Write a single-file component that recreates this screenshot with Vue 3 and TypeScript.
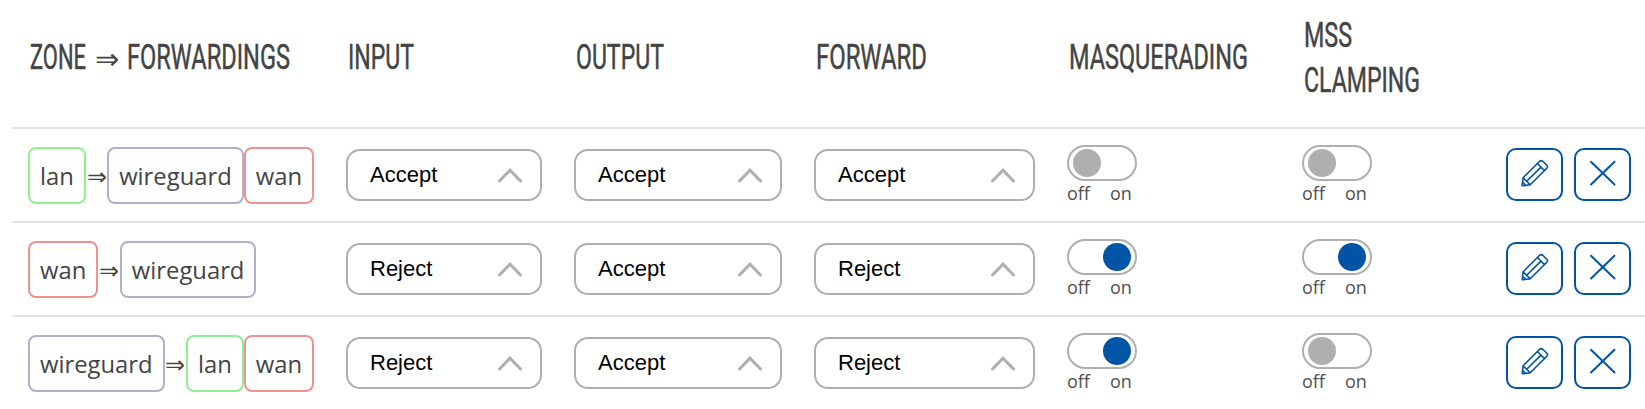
<script setup lang="ts">
interface Word {
  text: string
  width: number
  arrow?: boolean
}

type Zone = 'lan' | 'wan' | 'wireguard'

interface Rule {
  zone: Zone
  forwardings: Zone[]
  policies: string[]
  toggles: boolean[]
}

// Horizontal condensing applied to the heading letters
const CONDENSE = 0.66

const headings: Word[][][] = [
  [[{ text: 'ZONE', width: 56 }, { text: '⇒', width: 25, arrow: true }, { text: 'FORWARDINGS', width: 163 }]],
  [[{ text: 'INPUT', width: 66 }]],
  [[{ text: 'OUTPUT', width: 88 }]],
  [[{ text: 'FORWARD', width: 111 }]],
  [[{ text: 'MASQUERADING', width: 179 }]],
  [[{ text: 'MSS', width: 48 }], [{ text: 'CLAMPING', width: 116 }]],
  [],
]

const rules: Rule[] = [
  { zone: 'lan', forwardings: ['wireguard', 'wan'], policies: ['Accept', 'Accept', 'Accept'], toggles: [false, false] },
  { zone: 'wan', forwardings: ['wireguard'], policies: ['Reject', 'Accept', 'Reject'], toggles: [true, true] },
  { zone: 'wireguard', forwardings: ['lan', 'wan'], policies: ['Reject', 'Accept', 'Reject'], toggles: [true, false] },
]
</script>

<template>
  <main class="zones">
    <header class="row head">
      <div v-for="(lines, i) in headings" :key="i" class="heading">
        <div v-for="(line, j) in lines" :key="j" class="line">
          <template v-for="word in line" :key="word.text">
            <span v-if="word.arrow" class="arrow">{{ word.text }}</span>
            <svg v-else class="word" :width="word.width" height="45">
              <text
                x="0"
                y="35"
                :transform="`scale(${CONDENSE} 1)`"
                :textLength="word.width / CONDENSE"
                lengthAdjust="spacingAndGlyphs"
              >{{ word.text }}</text>
            </svg>
          </template>
        </div>
      </div>
    </header>

    <section v-for="rule in rules" :key="rule.zone" class="row rule">
      <div class="chain">
        <span class="badge" :class="rule.zone">{{ rule.zone }}</span>
        <span class="implies">⇒</span>
        <span v-for="target in rule.forwardings" :key="target" class="badge" :class="target">{{ target }}</span>
      </div>

      <button v-for="(policy, i) in rule.policies" :key="i" type="button" class="select">
        <span>{{ policy }}</span>
        <svg width="24" height="15" viewBox="0 0 24 15"><path d="M1.5 13 12 2.2 22.5 13" /></svg>
      </button>

      <div v-for="(on, i) in rule.toggles" :key="'t' + i" class="toggle" :class="{ on }">
        <div class="track"><i class="knob"></i></div>
        <div class="labels"><span>off</span><span>on</span></div>
      </div>

      <div class="actions">
        <button type="button" class="action" aria-label="Edit">
          <svg width="28" height="28" viewBox="0 0 28 28">
            <path d="M1.2 26.8 2.1 18.8 18.6 2.3Q20.2.8 21.8 2.3L25.8 6.3Q27.2 7.8 25.8 9.3L9.2 25.8ZM2.1 18.8 9.2 25.8M16.4 4.5 23.6 11.7M5.7 22.3 20 8.1M1.6 23.2 4.8 26.3" />
          </svg>
        </button>
        <button type="button" class="action" aria-label="Delete">
          <svg width="28" height="28" viewBox="0 0 28 28"><path class="cross" d="M2 2.8 25.5 25.5M25.5 2.8 2 25.5" /></svg>
        </button>
      </div>
    </section>
  </main>
</template>

<style>
body {
  background: #fff;
}
</style>

<style scoped>
.zones {
  margin-left: 12px;
  height: 409px;
  overflow: hidden;
  color: #444;
  font-family: "Open Sans", sans-serif;
}

.row {
  box-sizing: border-box;
  display: grid;
  grid-template-columns: 286px 196px 208px 221px 203px 172px 1fr;
  column-gap: 32px;
  padding-left: 16px;
}

.head {
  height: 127px;
  align-items: center;
  padding-bottom: 14px;
}

.heading {
  padding-left: 2px;
}

.line {
  display: flex;
  gap: 8px;
  height: 45px;
}

.word {
  overflow: visible;
  fill: #444;
  stroke: #444;
  stroke-width: 0.5;
  font: 400 35px Roboto, sans-serif;
}

.arrow {
  width: 25px;
  font: 29px/51px "Liberation Serif", serif;
  display: flex;
  justify-content: center;
}

.rule {
  height: 94px;
  border-top: 2px solid #e3e3e3;
}

.chain {
  display: flex;
  align-items: flex-start;
  padding-top: 18px;
}

.badge {
  box-sizing: border-box;
  height: 57px;
  padding: 0 10px;
  border: 2px solid;
  border-radius: 8px;
  color: #444;
  font-size: 23.8px;
  line-height: 54px;
}

.lan {
  border-color: #90f090;
}

.wan {
  border-color: #f09090;
}

.wireguard {
  border-color: #b0b0cc;
}

.implies {
  width: 21.6px;
  font: 23.5px/60px "Liberation Serif", serif;
  display: flex;
  justify-content: center;
}

.select {
  box-sizing: border-box;
  height: 52px;
  margin: 20px 0 0;
  padding: 0 18px 0 22px;
  border: 2px solid #afafaf;
  border-radius: 14px;
  background: #fff;
  color: #000;
  font: 22px "Liberation Sans", Arial, sans-serif;
  display: flex;
  align-items: center;
  justify-content: space-between;
}

.select svg {
  fill: none;
  stroke: #afafaf;
  stroke-width: 3;
  stroke-linecap: round;
}

.toggle {
  padding-top: 16px;
}

.track {
  box-sizing: border-box;
  width: 70px;
  height: 36px;
  padding: 2px 4px;
  border: 2px solid #afafaf;
  border-radius: 18px;
  display: flex;
}

.on .track {
  justify-content: flex-end;
}

.knob {
  width: 28px;
  height: 28px;
  border-radius: 50%;
  background: #afafaf;
}

.on .knob {
  background: #0054a6;
}

.labels {
  display: flex;
  gap: 20px;
  color: #505050;
  font-size: 18px;
  line-height: 25px;
}

.actions {
  display: flex;
  gap: 11px;
  padding-top: 19px;
}

.action {
  box-sizing: border-box;
  width: 57px;
  height: 53px;
  margin: 0;
  padding: 0 0 3px;
  border: 2px solid #0054a6;
  border-radius: 10px;
  background: #fff;
  display: flex;
  align-items: center;
  justify-content: center;
}

.action svg {
  fill: none;
  stroke: #0054a6;
  stroke-width: 1.6;
  stroke-linecap: round;
  stroke-linejoin: round;
}

.cross {
  stroke-width: 2;
}
</style>
